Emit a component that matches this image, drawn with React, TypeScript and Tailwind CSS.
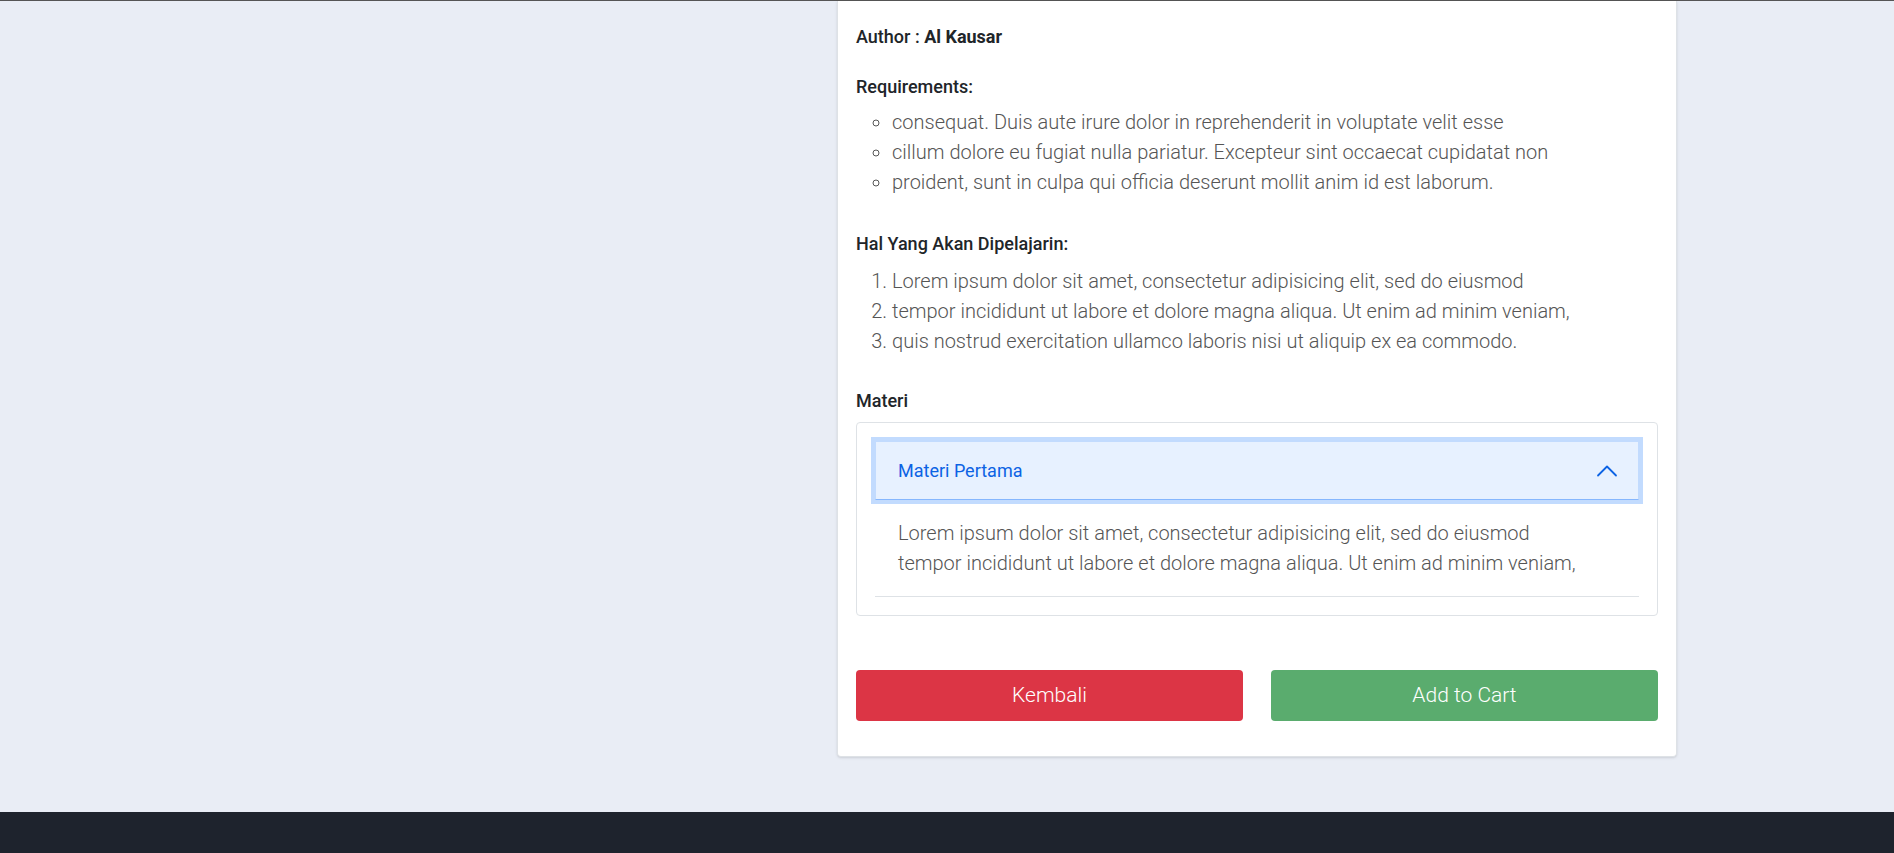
import React, { useState } from 'react';

const requirements = [
  'consequat. Duis aute irure dolor in reprehenderit in voluptate velit esse',
  'cillum dolore eu fugiat nulla pariatur. Excepteur sint occaecat cupidatat non',
  'proident, sunt in culpa qui officia deserunt mollit anim id est laborum.',
];

const learnings = [
  'Lorem ipsum dolor sit amet, consectetur adipisicing elit, sed do eiusmod',
  'tempor incididunt ut labore et dolore magna aliqua. Ut enim ad minim veniam,',
  'quis nostrud exercitation ullamco laboris nisi ut aliquip ex ea commodo.',
];

function ChevronUp() {
  return (
    <svg width="24" height="24" viewBox="0 0 16 16" fill="none" className="shrink-0 -mr-[3px]">
      <path d="M2 11L8 5L14 11" stroke="#0c63e4" strokeWidth="1.2" strokeLinecap="round" strokeLinejoin="round" />
    </svg>
  );
}

export default function App() {
  const [open, setOpen] = useState(true);

  return (
    <div className="min-h-screen bg-[#e9edf5] border-t border-[#555] font-['Roboto','Liberation_Sans',sans-serif] text-[#212529]">
      <main className="pb-[55px]">
        <div className="w-[1460px] mx-auto flex justify-end">
          <div className="w-[840px] bg-white border border-t-0 border-[#dee2e6] rounded-b-[4px] shadow-sm px-[18px] pt-[24px] pb-[35px]">
            {/* Author */}
            <p className="text-[18px] leading-[24px] font-medium">
              Author : <span className="font-bold">Al Kausar</span>
            </p>

            {/* Requirements */}
            <h6 className="mt-[26px] mb-[8px] text-[18px] leading-[24px] font-medium">Requirements:</h6>
            <ul className="list-[circle] pl-9 text-[20px] leading-[30px] font-light text-[#555]">
              {requirements.map(item => (
                <li key={item}>{item}</li>
              ))}
            </ul>

            {/* Learnings */}
            <h6 className="mt-[35px] mb-[10px] text-[18px] leading-[24px] font-medium">Hal Yang Akan Dipelajarin:</h6>
            <ol className="list-decimal pl-9 text-[20px] leading-[30px] font-light text-[#555]">
              {learnings.map(item => (
                <li key={item}>{item}</li>
              ))}
            </ol>

            {/* Materi */}
            <h6 className="mt-[33px] mb-[9px] text-[18px] leading-[24px] font-medium">Materi</h6>
            <div className="border border-[#dee2e6] rounded-[4px] p-[18px]">
              <div className="border-b border-[#dee2e6]">
                <button
                  onClick={() => setOpen(!open)}
                  className="w-full flex items-center justify-between px-[22px] py-[16px] bg-[#e7f1ff] border border-[#c2dbfe] border-b-[#86b7fe] shadow-[0_0_0_4px_#c2dbfe] text-[#0c63e4] text-[18px] leading-[25px] text-left"
                >
                  <span>Materi Pertama</span>
                  <ChevronUp />
                </button>
                {open && (
                  <div className="px-[23px] pt-[18px] pb-[18px] text-[20px] leading-[30px] font-light text-[#555]">
                    <p>Lorem ipsum dolor sit amet, consectetur adipisicing elit, sed do eiusmod</p>
                    <p>tempor incididunt ut labore et dolore magna aliqua. Ut enim ad minim veniam,</p>
                  </div>
                )}
              </div>
            </div>

            {/* Actions */}
            <div className="grid grid-cols-2 gap-7 mt-[54px]">
              <button className="h-[51px] rounded-[4px] bg-[#dc3545] text-white text-[21px] font-light">Kembali</button>
              <button className="h-[51px] rounded-[4px] bg-[#5aac6e] text-white text-[21px] font-light">Add to Cart</button>
            </div>
          </div>
        </div>
      </main>

      <footer className="bg-[#1e232d] h-[120px]" />
    </div>
  );
}
